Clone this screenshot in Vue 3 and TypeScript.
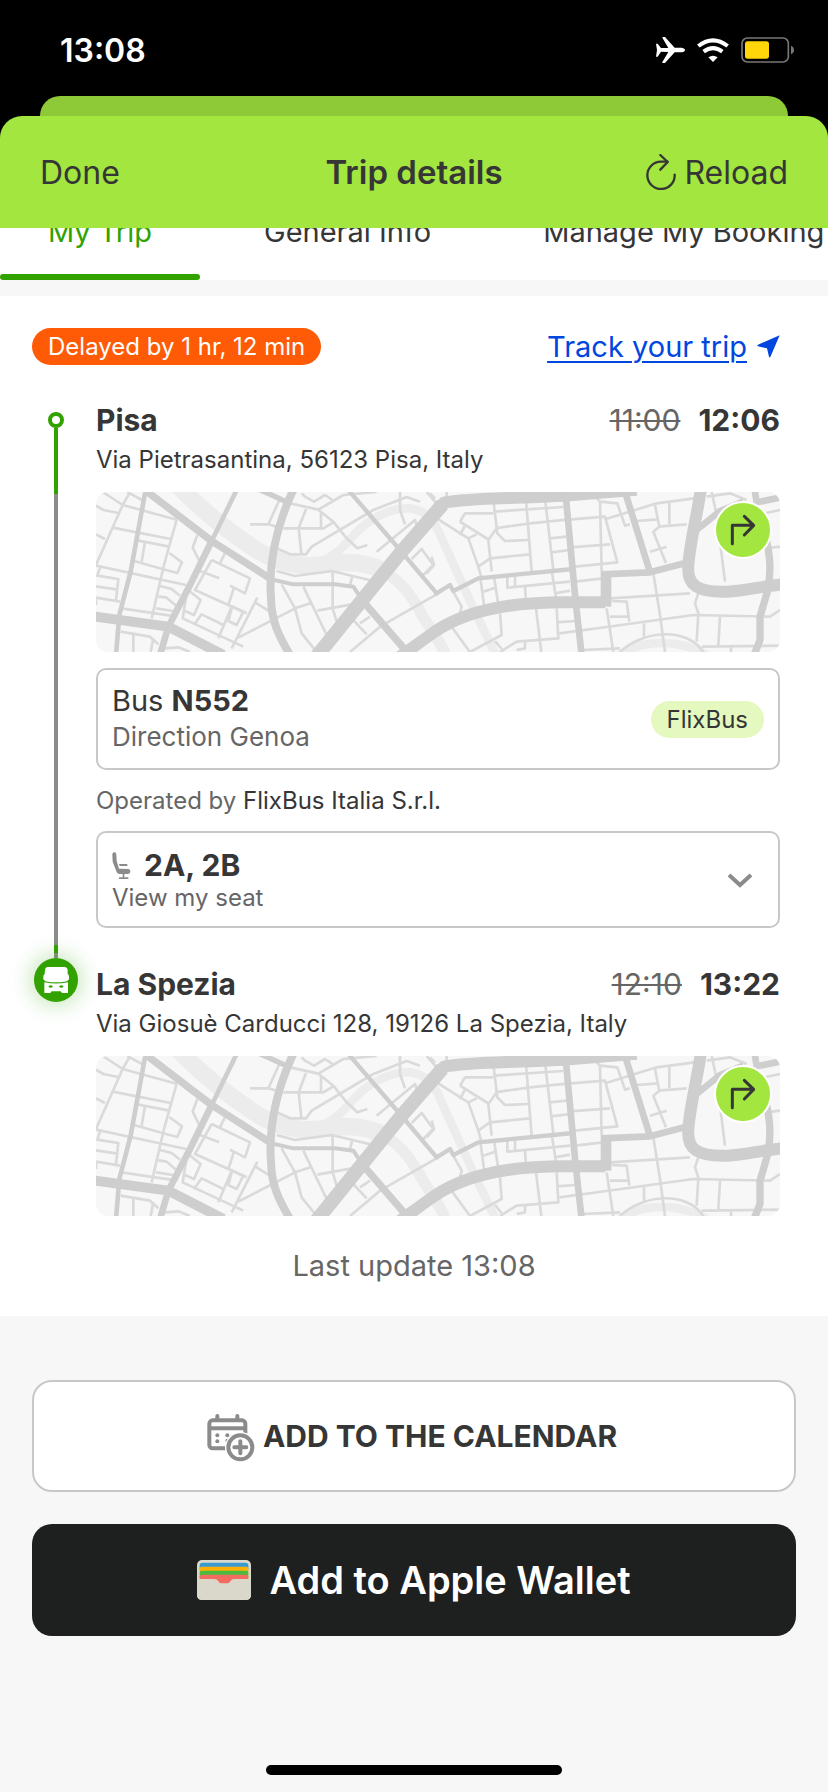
<script setup lang="ts">
import { ref } from 'vue'

interface Road {
  w: number
  d: string
}

interface Stop {
  city: string
  address: string
  planned: string
  actual: string
}

const origin: Stop = {
  city: 'Pisa',
  address: 'Via Pietrasantina, 56123 Pisa, Italy',
  planned: '11:00',
  actual: '12:06',
}

const destination: Stop = {
  city: 'La Spezia',
  address: 'Via Giosuè Carducci 128, 19126 La Spezia, Italy',
  planned: '12:10',
  actual: '13:22',
}

const tabs = ['My Trip', 'General Info', 'Manage My Booking']
const activeTab = ref(0)
const seatsOpen = ref(false)

const river: Road[] = [
  { w: 52, d: 'M262 0C340 80 430 150 500 195C570 240 650 250 720 236C800 225 850 240 890 262' },
  { w: 34, d: 'M820 242C900 254 945 300 985 370C1010 420 1040 450 1065 505' },
  { w: 26, d: 'M690 232C770 195 780 150 830 115C880 80 920 68 960 70C1010 75 1035 110 1055 160L1150 370L1215 505' },
  { w: 26, d: 'M1590 510C1660 462 1770 462 1850 510' },
]

const lanes: string[] = [
  'M38 21L98 60L260 104', 'M112 21L165 50', 'M118 25L98 60L18 240', 'M18 62L40 75L85 84',
  'M68 128L242 162', 'M18 148L45 162', 'M142 166L238 185', 'M260 104L222 240L185 400',
  'M165 170L155 230', 'M132 228L225 254', 'M238 204L276 232L262 264L225 254', 'M18 242L288 300',
  'M30 248L22 272L85 282L78 345', 'M18 304L78 313', 'M18 338L90 350', 'M18 338V360',
  'M94 370L262 395', 'M210 303L245 312L270 332', 'M205 334L230 338L262 365', 'M198 370L250 378',
  'M92 440L180 455L205 478', 'M130 450V501', 'M190 460L182 501', 'M225 490L265 487L300 501',
  'M322 150L308 188L328 228', 'M405 204L390 235', 'M365 225L480 280L465 325L420 302', 'M365 225L315 315L460 380',
  'M330 258L388 280', 'M432 308L415 360L470 385', 'M298 318L332 345L312 390L285 378', 'M290 325L278 400L460 485',
  'M312 420L335 388L400 420', 'M425 365L385 460', 'M425 370L415 408L440 420L460 380', 'M502 338L425 490',
  'M495 352L540 380', 'M445 458L620 368', 'M480 118H535L560 125', 'M568 45L535 118',
  'M600 55L685 74L730 110', 'M635 25L645 35L672 50L705 30L728 45', 'M648 72L626 130L634 205', 'M580 130H700L730 112',
  'M693 78V128', 'M685 74L760 30L860 21', 'M730 110L770 160L802 190L832 180', 'M560 190L600 208H648L665 185L850 75L950 36L990 50',
  'M930 21V75L945 118', 'M860 200L975 105L980 120', 'M1010 21L1040 55', 'M560 258L615 273L725 258L850 288',
  'M728 258V370L740 410', 'M788 270L780 300', 'M575 298L615 370L635 445L680 501', 'M615 370L662 355',
  'M640 305L710 450', 'M682 377L785 358', 'M785 400L830 448', 'M810 415L840 395',
  'M780 501L870 425L1045 325', 'M965 222L995 192L1030 240L1000 270', 'M1040 100L1135 160L1165 245L1175 280',
  'M1025 215L1032 240L1010 265', 'M1135 160L1160 148', 'M1110 110L1125 85H1210', 'M1110 110L1198 165',
  'M1125 122L1110 150', 'M1210 45L1222 145L1245 168L1315 165', 'M1220 130L1195 165L1205 260', 'M1215 130L1320 115',
  'M1165 245L1200 220L1320 208', 'M1308 45L1325 260', 'M1365 40L1390 255', 'M1210 80L1420 66',
  'M1320 115L1430 104', 'M1380 160L1430 155', 'M1385 202L1440 195', 'M1172 285L1182 360',
  'M1212 275L1225 360', 'M1252 275V308L1440 290', 'M1275 275V305', 'M1305 305L1308 350',
  'M1180 320L1215 308', 'M1385 255L1398 340', 'M1395 325L1440 317', 'M1090 320L1115 365L1110 385',
  'M1230 385L1235 450L1140 501', 'M1338 370L1354 501', 'M1400 370L1405 460L1280 470L1230 501', 'M1215 468L1235 492',
  'M1305 470V490L1280 495', 'M1400 412L1455 408', 'M1408 445L1550 426L1810 390L2040 395L2070 375', 'M1515 35L1530 50L1535 260',
  'M1530 50L1582 55L1605 122L1620 118', 'M1435 104L1545 95L1582 232L1455 245', 'M1440 187L1560 178', 'M1455 290L1540 280',
  'M1548 102L1700 55L1830 38', 'M1695 60L1708 125L1690 140L1728 235', 'M1640 108L1705 103', 'M1738 50V118',
  'M1705 125L1790 118', 'M1680 200L1730 185', 'M1865 21L1880 90L1905 290', 'M1850 35L1920 25L1970 45',
  'M1690 265L1710 390L1725 501', 'M1560 340L1800 325', 'M1550 370L1570 501', 'M1565 348L1610 350L1618 410',
  'M1560 395H1618', 'M1825 325L1815 355L1825 385L1820 470', 'M1890 395L1885 480', 'M1662 415V455',
  'M1475 495L1590 490', 'M1590 501C1660 435 1790 425 1840 501', 'M1835 485L2070 482', 'M1923 485V501',
  'M2030 190L2070 185', 'M2000 90L2070 75', 'M1020 25L1035 40', 'M1088 430L1140 501', 'M1070 21V40',
]

const streets: Road[] = [
  { w: 14, d: 'M165 25L122 260L88 390L78 510' },
  { w: 14, d: 'M440 15L365 168' },
  { w: 20, d: 'M365 168L300 300L235 425L210 510' },
  { w: 30, d: 'M10 394L235 425L400 510' },
  { w: 22, d: 'M165 15L365 168L540 280' },
  { w: 24, d: 'M612 10C560 120 535 230 543 340C545 410 565 450 600 510' },
  { w: 16, d: 'M500 10L600 55' },
  { w: 12, d: 'M540 282L610 298H735L790 305L820 350' },
  { w: 13, d: 'M775 15L930 195L1040 325L1080 300L1090 318L1165 280L1450 252' },
  { w: 22, d: 'M820 350L950 500' },
  { w: 42, d: 'M675 520L930 205L1058 58' },
  { w: 36, d: 'M1035 84L1062 53C1140 38 1240 42 1420 32L1640 14' },
  { w: 36, d: 'M930 515L1020 450C1120 375 1260 352 1425 352H1545' },
  { w: 32, d: 'M1548 365V262' },
  { w: 20, d: 'M1534 268L1680 262L1795 232' },
  { w: 20, d: 'M1427 30L1457 350L1475 510' },
  { w: 20, d: 'M1605 20L1680 262' },
  { w: 36, d: 'M1832 15C1822 90 1800 170 1795 240C1790 300 1820 322 1910 320C1970 318 2020 302 2080 298' },
  { w: 20, d: 'M1820 135L1890 78L1960 50' },
  { w: 20, d: 'M1994 15L2000 52L2080 36' },
  { w: 22, d: 'M2015 120C2045 200 2042 260 2035 310L2010 395V465L1992 510' },
]
</script>

<template>
  <div class="screen">
    <div class="backdrop">
      <div class="status">
        <span class="clock">13:08</span>
        <span class="status-icons">
          <svg width="29" height="26" viewBox="725 111 87 78" aria-hidden="true">
            <path fill="#fff" d="M725 131L730 131L740 144L762 144L744 113Q743 111 746 111H752L781 143H802Q812 145 812 150T802 157H781L752 189H746Q743 189 744 186L762 156L740 155L730 170H725L728 150Z" />
          </svg>
          <svg width="32" height="24" viewBox="851 111 96 72" aria-hidden="true">
            <g fill="none" stroke="#fff" stroke-width="12">
              <path d="M855 135Q899 101 943 135" />
              <path d="M871 152Q899 131 927 152" />
            </g>
            <path fill="#fff" d="M885 169Q899 159 913 169L899 183Z" />
          </svg>
          <svg width="53" height="26" viewBox="981 110 159 78" aria-hidden="true">
            <rect x="984" y="113" width="139" height="72" rx="16" fill="none" stroke="#777" stroke-width="5" />
            <rect x="993" y="123" width="72" height="52" rx="8" fill="#ffd60a" />
            <path d="M1131 136Q1140 140 1140 149T1131 162Z" fill="#777" />
          </svg>
        </span>
      </div>
      <div class="back-card"></div>
      <header class="bar">
        <button class="bar-btn" type="button">Done</button>
        <h1>Trip details</h1>
        <button class="bar-btn end" type="button">
          <svg width="30" height="36" viewBox="689 462 90 108" fill="none" stroke="#363636" stroke-width="7" stroke-linecap="round" stroke-linejoin="round" aria-hidden="true">
            <path d="M775 524A41 41 0 1 1 734 485H753" />
            <path d="M732 465L754 486L732 509" />
          </svg>
          Reload
        </button>
      </header>
    </div>

    <nav class="tabs">
      <button
        v-for="(tab, i) in tabs"
        :key="tab"
        type="button"
        :class="['tab', { active: i === activeTab }]"
        @click="activeTab = i"
      >{{ tab }}</button>
    </nav>

    <main class="trip">
      <div class="notice">
        <span class="delay">Delayed by 1 hr, 12 min</span>
        <a class="track" href="#track">
          <span>Track your trip</span>
          <svg width="23" height="23" viewBox="0 0 69 69" aria-hidden="true"><path fill="#0046df" d="M68 1L40 66Q37 69 36 65L30 40L3 34Q-1 32 3 29Z" /></svg>
        </a>
      </div>

      <section class="leg">
        <div class="rail">
          <span class="dot"></span>
          <span class="line done"></span>
          <span class="line rest"></span>
          <span class="line tick"></span>
          <span class="line stub"></span>
        </div>
        <div class="body first">
          <div class="row">
            <h2>{{ origin.city }}</h2>
            <span class="times"><s>{{ origin.planned }}</s><b>{{ origin.actual }}</b></span>
          </div>
          <p class="address">{{ origin.address }}</p>
          <div class="map">
            <svg class="map-art" viewBox="18 21 2052 480" preserveAspectRatio="xMidYMid slice" fill="none" stroke-linejoin="round" aria-hidden="true">
              <path v-for="r in river" :key="r.d" :d="r.d" :stroke-width="r.w" stroke="#ececec" />
              <path v-for="d in lanes" :key="d" :d="d" stroke-width="8" stroke="#dadada" />
              <path v-for="r in streets" :key="r.d" :d="r.d" :stroke-width="r.w" stroke="#cecece" />
            </svg>
            <button class="route" type="button" aria-label="Directions to Pisa stop">
              <svg width="26" height="32" viewBox="900 90 78 96" aria-hidden="true"><path d="M907 179V124H970M943 97L971 124L943 153" /></svg>
            </button>
          </div>

          <div class="card">
            <div>
              <p class="bus">Bus <b>N552</b></p>
              <p class="direction">Direction Genoa</p>
            </div>
            <span class="brand">FlixBus</span>
          </div>

          <p class="operator">Operated by <span>FlixBus Italia S.r.l.</span></p>

          <button class="card seats" type="button" :aria-expanded="seatsOpen" @click="seatsOpen = !seatsOpen">
            <span class="seat-text">
              <span class="seat-line">
                <svg width="19" height="27" viewBox="281 573 57 81" aria-hidden="true">
                  <path fill="#8b8b8b" d="M282 580Q283 573 289 574Q294 575 294 582L295 600L302 623L330 624Q337 625 336 632Q335 639 328 639H302Q296 638 294 631L283 602ZM302 609H327V615H304ZM313 639H318V649H330V654H302V649H313Z" />
                </svg>
                <b>2A, 2B</b>
              </span>
              <span class="view">View my seat</span>
            </span>
            <svg width="24" height="15" viewBox="0 0 24 15" fill="none" stroke="#8b8b8b" stroke-width="4" aria-hidden="true"><path d="M1 2L12 12L23 2" /></svg>
          </button>
        </div>
      </section>

      <section class="leg">
        <div class="rail">
          <span class="bus-dot">
            <svg width="26" height="26" viewBox="69 111 78 78" aria-hidden="true">
              <path fill="#fff" d="M83 111H133Q142 111 143 120V132Q147 134 147 140V148L144 151Q141 157 108 157T73 151L70 148V140Q70 134 74 132L75 120Q76 111 83 111ZM73 157Q108 164 144 157V189H126L122 184H95L91 189H73Z" />
              <path fill="#31a200" d="M85 170Q92 162 99 170Q92 176 85 170ZM117 170Q124 162 131 170Q124 176 117 170Z" />
            </svg>
          </span>
        </div>
        <div class="body last">
          <div class="row">
            <h2>{{ destination.city }}</h2>
            <span class="times"><s>{{ destination.planned }}</s><b>{{ destination.actual }}</b></span>
          </div>
          <p class="address">{{ destination.address }}</p>
          <div class="map">
            <svg class="map-art" viewBox="18 21 2052 480" preserveAspectRatio="xMidYMid slice" fill="none" stroke-linejoin="round" aria-hidden="true">
              <path v-for="r in river" :key="r.d" :d="r.d" :stroke-width="r.w" stroke="#ececec" />
              <path v-for="d in lanes" :key="d" :d="d" stroke-width="8" stroke="#dadada" />
              <path v-for="r in streets" :key="r.d" :d="r.d" :stroke-width="r.w" stroke="#cecece" />
            </svg>
            <button class="route" type="button" aria-label="Directions to La Spezia stop">
              <svg width="26" height="32" viewBox="900 90 78 96" aria-hidden="true"><path d="M907 179V124H970M943 97L971 124L943 153" /></svg>
            </button>
          </div>
        </div>
      </section>

      <p class="updated">Last update 13:08</p>
    </main>

    <footer class="actions">
      <button class="action calendar" type="button">
        <svg width="48" height="52" viewBox="50 122 144 156" fill="none" stroke="#8b8b8b" aria-hidden="true">
          <rect x="57" y="153" width="108" height="84" rx="10" stroke-width="12" />
          <path d="M57 177H165" stroke-width="12" />
          <path d="M81 140V152M141 140V152" stroke-width="12" stroke-linecap="round" />
          <g fill="#8b8b8b" stroke="none">
            <circle cx="81" cy="198" r="6" />
            <circle cx="81" cy="216" r="6" />
            <circle cx="111" cy="198" r="6" />
            <circle cx="111" cy="214" r="6" />
          </g>
          <circle cx="150" cy="234" r="46" fill="#fff" stroke="none" />
          <circle cx="150" cy="234" r="36" fill="#fff" stroke-width="12" />
          <path d="M150 216V252M132 234H168" stroke-width="12" stroke-linecap="round" />
        </svg>
        ADD TO THE CALENDAR
      </button>
      <button class="action wallet" type="button">
        <svg width="54" height="40" viewBox="0 0 162 120" aria-hidden="true">
          <rect width="162" height="120" rx="15" fill="#dad8cb" />
          <path d="M8 30V16Q8 8 16 8H146Q154 8 154 16V30Z" fill="#3a9bd0" />
          <path d="M8 42V26Q8 20 14 20H148Q154 20 154 26V42Z" fill="#ffb003" />
          <path d="M8 54V38Q8 32 14 32H148Q154 32 154 38V54Z" fill="#4cba3f" />
          <path d="M8 70V50Q8 44 14 44H148Q154 44 154 50V70Z" fill="#f26d5f" />
          <path d="M0 57H52Q60 57 64 64Q73 76 82 76T100 64Q104 57 112 57H162V105Q162 120 147 120H15Q0 120 0 105Z" fill="#dad8cb" />
        </svg>
        Add to Apple Wallet
      </button>
      <div class="home"></div>
    </footer>
  </div>
</template>

<style>
body {
  margin: 0;
  background: #f7f7f7;
}
</style>

<style scoped>
.screen {
  display: flex;
  flex-direction: column;
  min-height: 100vh;
  background: #f7f7f7;
  color: #363636;
  font-family: Inter, "Liberation Sans", sans-serif;
}

h1,
h2,
p {
  margin: 0;
}

button {
  border: 0;
  padding: 0;
  background: none;
  color: inherit;
  font: inherit;
  cursor: pointer;
}

svg {
  display: block;
  flex: none;
}

b {
  font-weight: 700;
}

.backdrop {
  background: #000;
}

.status {
  display: flex;
  align-items: center;
  justify-content: space-between;
  box-sizing: border-box;
  height: 96px;
  padding: 4px 34px 0 60px;
  color: #fff;
}

.clock {
  font-size: 32px;
  font-weight: 600;
}

.status-icons {
  display: flex;
  align-items: center;
  gap: 12px;
}

.back-card {
  height: 20px;
  margin: 0 40px;
  border-radius: 20px 20px 0 0;
  background: #8ec937;
}

.bar {
  display: grid;
  grid-template-columns: 1fr auto 1fr;
  align-items: center;
  height: 112px;
  padding: 0 40px;
  border-radius: 22px 22px 0 0;
  background: #a2e63f;
  font-size: 32px;
}

.bar h1 {
  font-size: 33px;
  font-weight: 600;
}

.bar-btn {
  display: flex;
  align-items: center;
  gap: 8px;
}

.bar-btn.end {
  justify-self: end;
}

.tabs {
  display: flex;
  align-items: flex-end;
  gap: 16px;
  height: 52px;
  overflow: hidden;
  background: #fff;
}

.tab {
  flex: none;
  height: 92px;
  padding: 0 48px;
  border-bottom: 6px solid transparent;
  font-size: 29px;
  white-space: nowrap;
}

.tab.active {
  position: relative;
  color: #31a200;
}

.tab.active::after {
  position: absolute;
  right: 0;
  bottom: -6px;
  left: 0;
  height: 6px;
  border-radius: 3px;
  background: #31a200;
  content: "";
}

.trip {
  margin-top: 16px;
  padding: 32px 48px 30px 32px;
  background: #fff;
}

.notice {
  display: flex;
  align-items: center;
  justify-content: space-between;
  height: 37px;
  margin-bottom: 35px;
}

.delay,
.brand {
  padding: 0 16px;
  border-radius: 19px;
  font-size: 24px;
  line-height: 37px;
}

.delay {
  background: #ff5a05;
  color: #fff;
}

.track {
  display: flex;
  align-items: center;
  gap: 10px;
  color: #0046df;
  font-size: 29px;
  text-decoration: none;
}

.track span {
  text-decoration: underline;
  text-decoration-thickness: 2px;
  text-underline-offset: 4px;
}

.leg {
  display: grid;
  grid-template-columns: 48px 1fr;
  gap: 16px;
}

.rail {
  display: flex;
  flex-direction: column;
  align-items: center;
}

.dot {
  box-sizing: border-box;
  width: 16px;
  height: 16px;
  margin-top: 12px;
  border: 4px solid #31a200;
  border-radius: 50%;
}

.line {
  width: 4px;
}

.line.done {
  height: 66px;
  background: #31a200;
}

.line.rest {
  flex: 1;
  background: #8b8b8b;
}

.line.tick {
  height: 8px;
  background: #31a200;
}

.line.stub {
  height: 5px;
  background: #8b8b8b;
}

.bus-dot {
  display: grid;
  place-items: center;
  width: 44px;
  height: 44px;
  border-radius: 50%;
  background: #31a200;
  box-shadow: 0 0 24px rgba(49, 162, 0, 0.4);
}

.body {
  min-width: 0;
}

.body.first {
  padding-bottom: 30px;
}

.body.last {
  padding-top: 6px;
}

.row {
  display: flex;
  justify-content: space-between;
  font-size: 30px;
  line-height: 40px;
}

.row h2 {
  font-size: 30px;
  font-weight: 700;
}

.times {
  display: flex;
  gap: 18px;
}

.times s {
  color: #666;
  text-decoration-thickness: 2px;
}

.address {
  margin: 4px 0 16px;
  font-size: 24px;
  line-height: 32px;
}

.map {
  position: relative;
  height: 160px;
  overflow: hidden;
  border-radius: 12px;
  background: #f7f7f7;
}

.map-art {
  width: 100%;
  height: 100%;
}

.route {
  position: absolute;
  top: 9px;
  right: 8px;
  display: grid;
  place-items: center;
  width: 58px;
  height: 58px;
  border: 2px solid #fff;
  border-radius: 50%;
  background: #a2e63f;
}

.route path {
  fill: none;
  stroke: #363636;
  stroke-width: 9;
  stroke-linecap: round;
  stroke-linejoin: round;
}

.card {
  display: flex;
  align-items: center;
  justify-content: space-between;
  box-sizing: border-box;
  width: 100%;
  padding: 13px 14px;
  border: 2px solid #c8c8c8;
  border-radius: 10px;
}

.map + .card {
  margin-top: 16px;
}

.bus {
  font-size: 29px;
  line-height: 36px;
}

.direction {
  color: #666;
  font-size: 26px;
  line-height: 36px;
}

.brand {
  background: #e5f8c0;
}

.operator {
  margin: 15px 0 14px;
  color: #666;
  font-size: 24px;
  line-height: 32px;
}

.operator span {
  color: #363636;
}

.seats {
  padding: 14px 26px 13px 14px;
  text-align: left;
}

.seat-line {
  display: flex;
  align-items: center;
  gap: 13px;
  font-size: 30px;
  line-height: 36px;
}

.view {
  display: block;
  color: #666;
  font-size: 24px;
  line-height: 30px;
}

.updated {
  margin: 30px 0 0 16px;
  color: #666;
  font-size: 29px;
  line-height: 40px;
  text-align: center;
}

.actions {
  display: flex;
  flex: 1;
  flex-direction: column;
  gap: 32px;
  padding: 64px 32px 17px;
}

.action {
  display: flex;
  align-items: center;
  justify-content: center;
  box-sizing: border-box;
  width: 100%;
  height: 112px;
  border-radius: 20px;
}

.calendar {
  gap: 8px;
  padding-right: 4px;
  border: 2px solid #c8c8c8;
  background: #fff;
  font-size: 30px;
  font-weight: 700;
}

.wallet {
  gap: 18px;
  background: #1e201f;
  color: #fff;
  font-size: 38px;
  font-weight: 600;
}

.home {
  align-self: center;
  width: 296px;
  height: 10px;
  margin-top: auto;
  border-radius: 5px;
  background: #000;
}
</style>
